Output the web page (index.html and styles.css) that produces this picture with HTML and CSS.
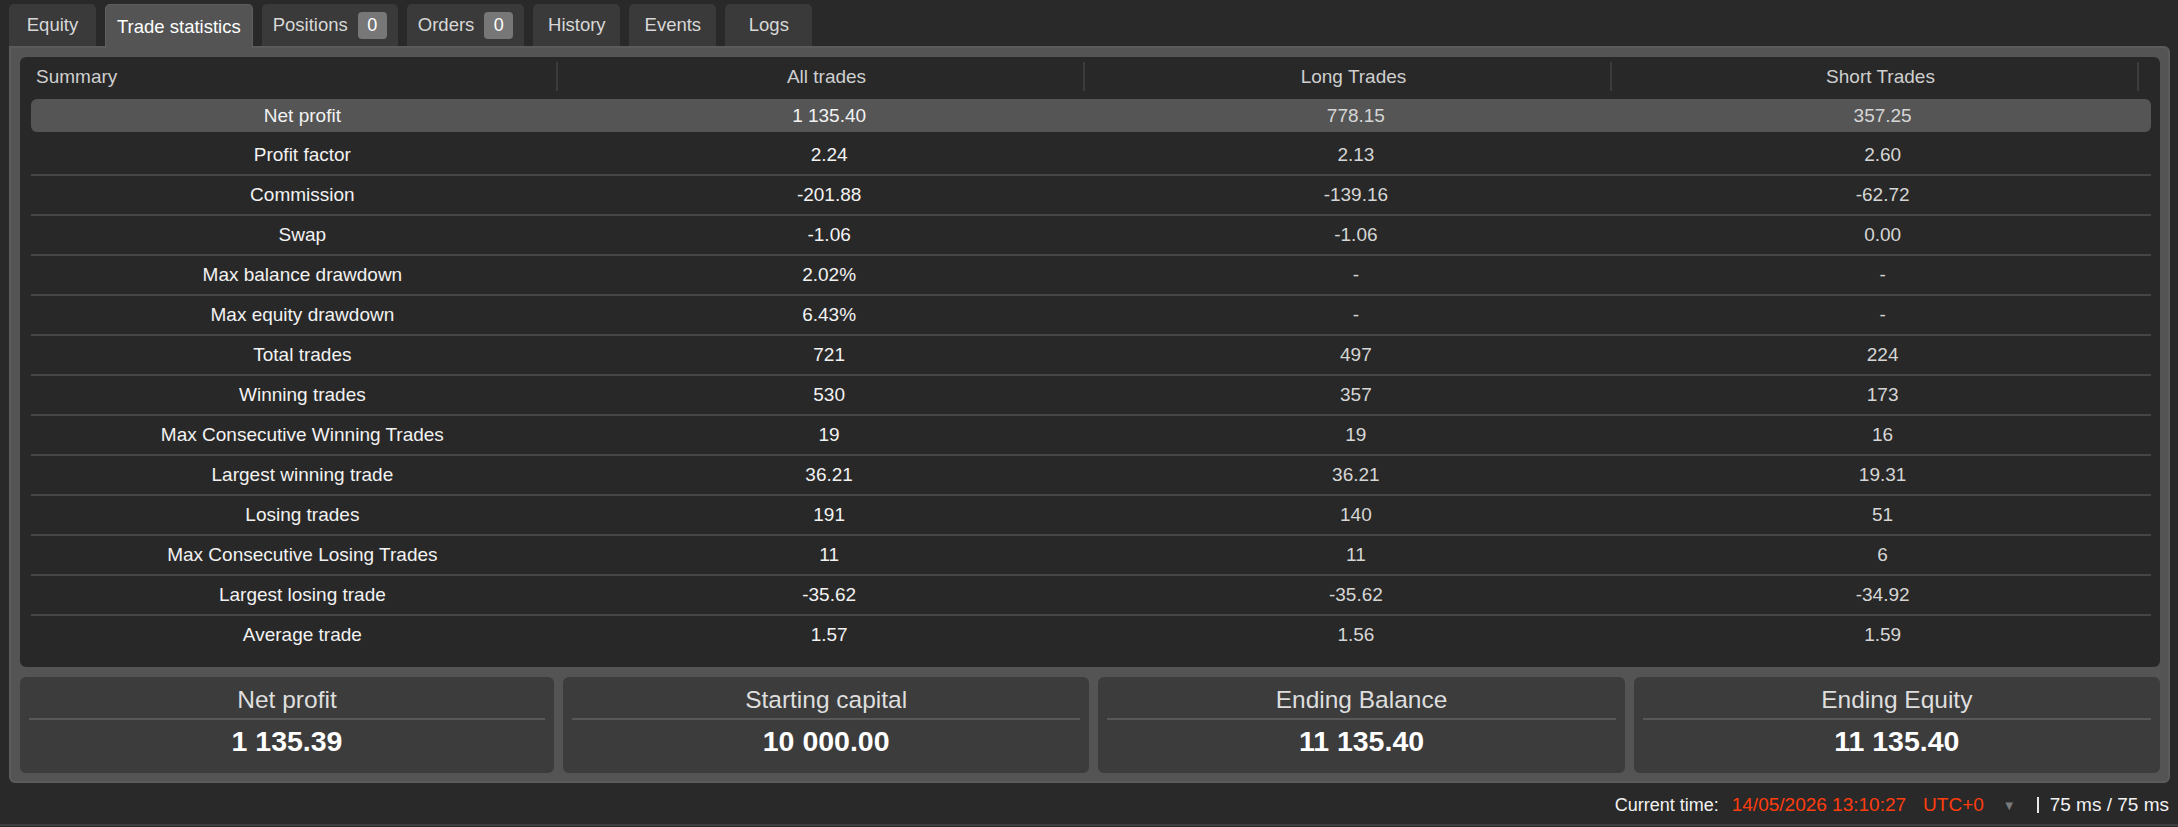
FILE: index.html
```html
<!DOCTYPE html>
<html lang="en">
<head>
    <meta charset="UTF-8">
    <meta name="viewport" content="width=device-width, initial-scale=1.0">
    <title>Trade statistics</title>
    <link rel="stylesheet" href="styles.css">
</head>
<body>
    <div class="tabs">
        <div class="tab">Equity</div>
        <div class="tab active">Trade statistics</div>
        <div class="tab">Positions <span class="badge">0</span></div>
        <div class="tab">Orders <span class="badge">0</span></div>
        <div class="tab">History</div>
        <div class="tab">Events</div>
        <div class="tab">Logs</div>
    </div>

    <div class="panel">
        <div class="stats">
            <div class="stats-head">
                <div class="head-cell left">Summary</div>
                <div class="head-cell">All trades</div>
                <div class="head-cell">Long Trades</div>
                <div class="head-cell">Short Trades</div>
            </div>

            <div class="row selected">
                <div>Net profit</div><div>1 135.40</div><div class="dim">778.15</div><div class="dim">357.25</div>
            </div>
            <div class="row">
                <div>Profit factor</div><div>2.24</div><div class="dim">2.13</div><div class="dim">2.60</div>
            </div>
            <div class="row">
                <div>Commission</div><div>-201.88</div><div class="dim">-139.16</div><div class="dim">-62.72</div>
            </div>
            <div class="row">
                <div>Swap</div><div>-1.06</div><div class="dim">-1.06</div><div class="dim">0.00</div>
            </div>
            <div class="row">
                <div>Max balance drawdown</div><div>2.02%</div><div class="dim">-</div><div class="dim">-</div>
            </div>
            <div class="row">
                <div>Max equity drawdown</div><div>6.43%</div><div class="dim">-</div><div class="dim">-</div>
            </div>
            <div class="row">
                <div>Total trades</div><div>721</div><div class="dim">497</div><div class="dim">224</div>
            </div>
            <div class="row">
                <div>Winning trades</div><div>530</div><div class="dim">357</div><div class="dim">173</div>
            </div>
            <div class="row">
                <div>Max Consecutive Winning Trades</div><div>19</div><div class="dim">19</div><div class="dim">16</div>
            </div>
            <div class="row">
                <div>Largest winning trade</div><div>36.21</div><div class="dim">36.21</div><div class="dim">19.31</div>
            </div>
            <div class="row">
                <div>Losing trades</div><div>191</div><div class="dim">140</div><div class="dim">51</div>
            </div>
            <div class="row">
                <div>Max Consecutive Losing Trades</div><div>11</div><div class="dim">11</div><div class="dim">6</div>
            </div>
            <div class="row">
                <div>Largest losing trade</div><div>-35.62</div><div class="dim">-35.62</div><div class="dim">-34.92</div>
            </div>
            <div class="row last">
                <div>Average trade</div><div>1.57</div><div class="dim">1.56</div><div class="dim">1.59</div>
            </div>
        </div>

        <div class="cards">
            <div class="card">
                <div class="card-title">Net profit</div>
                <div class="card-value">1 135.39</div>
            </div>
            <div class="card">
                <div class="card-title">Starting capital</div>
                <div class="card-value">10 000.00</div>
            </div>
            <div class="card">
                <div class="card-title">Ending Balance</div>
                <div class="card-value">11 135.40</div>
            </div>
            <div class="card">
                <div class="card-title">Ending Equity</div>
                <div class="card-value">11 135.40</div>
            </div>
        </div>
    </div>

    <div class="status">
        <span class="label">Current time:</span>
        <span class="clock">14/05/2026 13:10:27</span>
        <span class="clock tz">UTC+0</span>
        <span class="caret">&#9660;</span>
        <span class="pipe"></span>
        <span class="ping">75 ms / 75 ms</span>
    </div>
</body>
</html>
```

FILE: styles.css
```css
body {
    margin: 0;
    background-color: #292929;
    font-family: "Liberation Sans", Arial, sans-serif;
    color: #f2f2f2;
}

/* tab strip */
.tabs {
    display: flex;
    gap: 9px;
    padding: 4px 0 0 9px;
    height: 42px;
}

.tab {
    position: relative;
    display: flex;
    align-items: center;
    justify-content: center;
    min-width: 87px;
    box-sizing: border-box;
    padding: 0 11px;
    background-color: #3a3a3a;
    border-radius: 5px 5px 0 0;
    color: #d8d8d8;
    font-size: 18.5px;
}

.tab.active {
    z-index: 1;
    height: 44px;
    background-color: #545454;
    border: 1px solid #5e5e5e;
    border-bottom: none;
    color: #fff;
}

.badge {
    display: inline-flex;
    align-items: center;
    justify-content: center;
    width: 29px;
    height: 27px;
    margin-left: 10px;
    background-color: #777;
    border-radius: 4px;
    color: #fff;
    font-size: 18px;
}

/* main panel */
.panel {
    margin: 0 8px 0 9px;
    padding: 9px 8px 8px 9px;
    background-color: #545454;
    border: 2px solid #5b5b5b;
    border-radius: 0 6px 6px 6px;
}

.stats {
    padding: 0 9px 11px 11px;
    background-color: #282828;
    border-radius: 6px;
    font-size: 19px;
}

.stats-head {
    display: grid;
    grid-template-columns: repeat(4, 527px) 1fr;
    align-items: center;
    height: 39px;
    color: #cfcfcf;
}

.head-cell {
    height: 29px;
    line-height: 29px;
    padding-left: 12px;
    text-align: center;
    border-right: 2px solid #3c3c3c;
}

.head-cell.left {
    text-align: left;
    padding-left: 5px;
}

.row {
    display: grid;
    grid-template-columns: repeat(4, 1fr);
    box-sizing: border-box;
    height: 40px;
    padding: 0 5px 0 8px;
    line-height: 38px;
    text-align: center;
    border-bottom: 2px solid #464646;
}

.row.selected {
    height: 33px;
    line-height: 33px;
    margin: 3px 0 4px;
    background-color: #555;
    border-radius: 6px;
    border-bottom: none;
}

.row.last {
    border-bottom: none;
}

.dim {
    color: #d6d6d6;
}

/* summary cards */
.cards {
    display: grid;
    grid-template-columns: 534px repeat(3, 1fr);
    gap: 9px;
    margin-top: 10px;
}

.card {
    height: 96px;
    padding: 0 9px;
    background-color: #3c3c3c;
    border-radius: 6px;
    text-align: center;
}

.card-title {
    height: 41px;
    line-height: 46px;
    border-bottom: 2px solid #585858;
    color: #dedede;
    font-size: 24.5px;
}

.card-value {
    line-height: 42px;
    color: #fff;
    font-size: 28.5px;
    font-weight: bold;
}

/* status bar */
.status {
    display: flex;
    align-items: center;
    justify-content: flex-end;
    height: 38px;
    padding: 3px 9px 0 0;
    border-bottom: 2px solid #3e3e3e;
    font-size: 19px;
}

.label {
    margin-right: 13px;
    font-size: 18px;
}

.clock {
    color: #ff3d0d;
}

.tz {
    margin-left: 17px;
}

.caret {
    margin-left: 19px;
    color: #7a7a7a;
    font-size: 13px;
}

.pipe {
    width: 2px;
    height: 16px;
    margin: 0 11px 0 21px;
    background-color: #e8e8e8;
}
```
